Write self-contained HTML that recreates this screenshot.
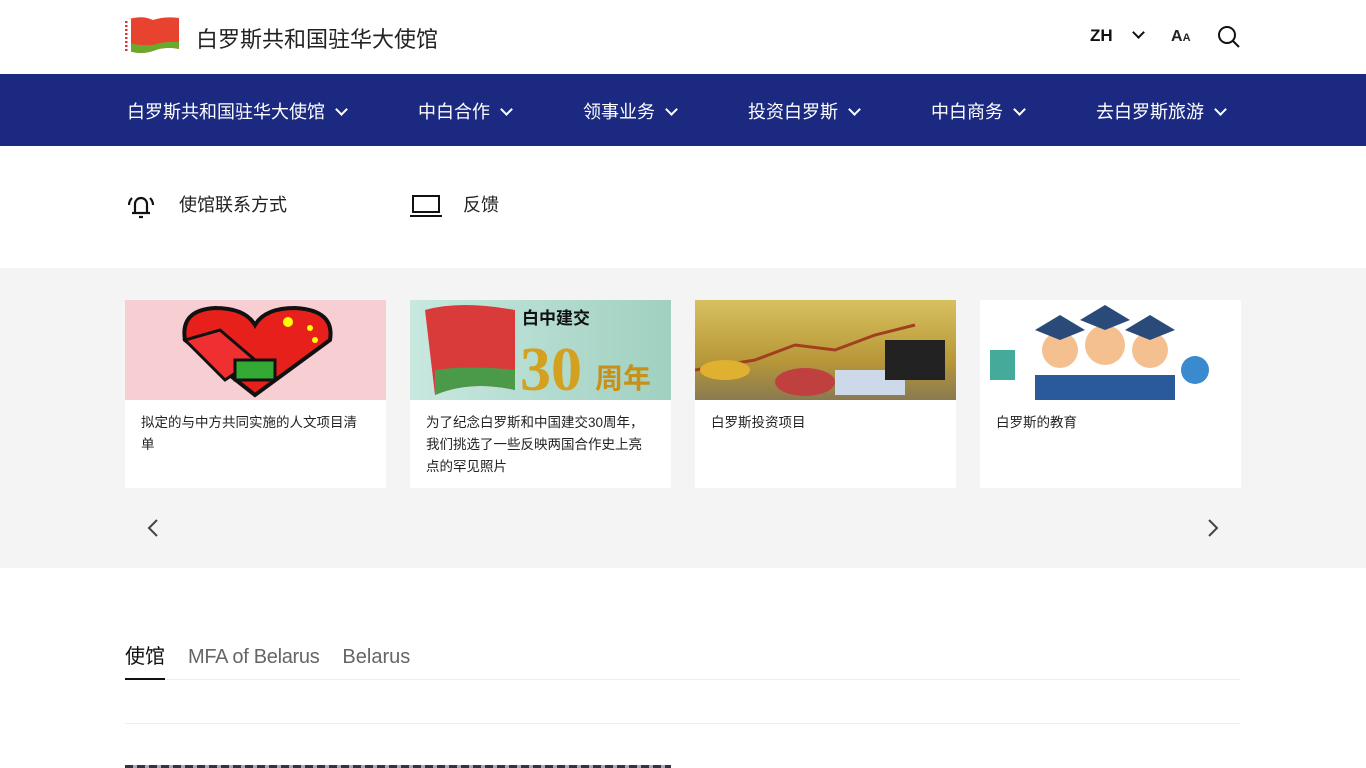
<!DOCTYPE html>
<html><head><meta charset="utf-8">
<style>
*{margin:0;padding:0;box-sizing:border-box}
body{width:1366px;height:768px;overflow:hidden;background:#fff;font-family:"Liberation Sans","Noto Sans CJK SC",sans-serif;color:#222}
.hdr{height:74px;position:relative}
.flag{position:absolute;left:125px;top:15px;width:54px;height:40px}
.title{position:absolute;left:196px;top:22px;font-size:22px;color:#222}
.zh{position:absolute;left:1090px;top:26px;font-size:17px;font-weight:bold;color:#111}
.nav{height:72px;background:#1b2a80;position:relative;color:#fff;font-size:18px}
.nav span{position:absolute;top:24px;white-space:nowrap}
.chev{display:inline-block;width:9px;height:9px;border-right:2px solid #fff;border-bottom:2px solid #fff;transform:rotate(45deg);margin-left:12px;position:relative;top:-4px}
.links{height:122px;position:relative;font-size:18px}
.gray{background:#f4f4f4;height:300px;position:relative}
.card{position:absolute;top:32px;width:261px;height:188px;background:#fff}
.card .img{height:100px;overflow:hidden;position:relative}
.card p{font-size:13.5px;line-height:22px;padding:12px 16px 0 16px;color:#222}
.tabs{position:absolute;top:640px;left:125px;font-size:20px}
</style></head><body>
<div class="hdr">
<svg class="flag" viewBox="0 0 54 40"><path d="M4 4 Q18 0 28 5 Q40 1 54 3 L54 34 Q40 31 28 36 Q16 40 4 36Z" fill="#e8432e"/><path d="M4 28 Q16 31 28 30 Q40 26 54 27 L54 34 Q40 31 28 36 Q16 40 4 36Z" fill="#6aaa2a"/><rect x="0" y="4" width="6" height="34" fill="#fff"/><path d="M1 6 V36" stroke="#d33" stroke-width="3" stroke-dasharray="2 2"/></svg>
<div class="title">白罗斯共和国驻华大使馆</div>
<div class="zh">ZH</div>
<span style="position:absolute;left:1134px;top:28px;width:9px;height:9px;border-right:2px solid #111;border-bottom:2px solid #111;transform:rotate(45deg)"></span>
<div style="position:absolute;left:1171px;top:28px;font-size:16px;font-weight:bold">A<span style="font-size:11px">A</span></div>
<svg style="position:absolute;left:1217px;top:25px" width="24" height="24" viewBox="0 0 24 24"><circle cx="10" cy="10" r="8" fill="none" stroke="#111" stroke-width="2"/><path d="M16 16 L22 22" stroke="#111" stroke-width="2"/></svg>
</div>
<div class="nav">
<span style="left:127px">白罗斯共和国驻华大使馆<i class="chev"></i></span>
<span style="left:418px">中白合作<i class="chev"></i></span>
<span style="left:583px">领事业务<i class="chev"></i></span>
<span style="left:748px">投资白罗斯<i class="chev"></i></span>
<span style="left:931px">中白商务<i class="chev"></i></span>
<span style="left:1096px">去白罗斯旅游<i class="chev"></i></span>
</div>
<div class="links">
<svg style="position:absolute;left:127px;top:46px" width="28" height="28" viewBox="0 0 28 28" fill="none" stroke="#111" stroke-width="2.2"><path d="M8 21 V12 A6 6 0 0 1 20 12 V21 Z M5 21 H23 M12 25 H16"/><path d="M5 6 Q2 9 2 13 M23 6 Q26 9 26 13"/></svg>
<div style="position:absolute;left:179px;top:45px">使馆联系方式</div>
<svg style="position:absolute;left:410px;top:48px" width="32" height="24" viewBox="0 0 32 24" fill="none" stroke="#111" stroke-width="2"><rect x="3" y="2" width="26" height="16"/><path d="M0 22 H32"/></svg>
<div style="position:absolute;left:463px;top:45px">反馈</div>
</div>
<div class="gray">
<div class="card" style="left:125px"><div class="img" style="background:#f7cfd2"><svg width="261" height="100"><path d="M130 95 L60 40 Q55 10 90 8 Q120 8 130 25 Q140 8 170 8 Q210 10 205 40Z" fill="#e8201c" stroke="#111" stroke-width="4"/><path d="M60 40 L100 80 L130 60 L95 30Z" fill="#f03030" stroke="#111" stroke-width="3"/><rect x="110" y="60" width="40" height="20" fill="#3a3" stroke="#111" stroke-width="3"/><circle cx="163" cy="22" r="5" fill="#ff0"/><circle cx="185" cy="28" r="3" fill="#ff0"/><circle cx="190" cy="40" r="3" fill="#ff0"/></svg></div><p>拟定的与中方共同实施的人文项目清单</p></div>
<div class="card" style="left:410px"><div class="img" style="background:linear-gradient(90deg,#c8e8e0,#a0d0c0)"><svg width="261" height="100"><path d="M15 10 Q50 0 105 10 L105 90 Q60 80 25 95Z" fill="#d93a3a"/><path d="M25 70 Q60 65 105 70 L105 90 Q60 80 25 95Z" fill="#4a9a4a"/><text x="110" y="90" font-size="62" font-weight="bold" fill="#d4a020" font-family="Liberation Serif,serif">30</text><text x="185" y="88" font-size="28" font-weight="bold" fill="#c89018" font-family="Noto Sans CJK SC,sans-serif">周年</text><text x="112" y="24" font-size="17" font-weight="bold" fill="#111" font-family="Noto Sans CJK SC,sans-serif">白中建交</text></svg></div><p>为了纪念白罗斯和中国建交30周年，我们挑选了一些反映两国合作史上亮点的罕见照片</p></div>
<div class="card" style="left:695px"><div class="img" style="background:linear-gradient(180deg,#d8c060,#b89838 60%,#8a7a50)"><svg width="261" height="100"><path d="M0 70 L60 60 L100 45 L140 50 L180 35 L220 25" stroke="#a04020" stroke-width="3" fill="none"/><ellipse cx="30" cy="70" rx="25" ry="10" fill="#e0b030"/><ellipse cx="110" cy="82" rx="30" ry="14" fill="#c04040"/><rect x="140" y="70" width="70" height="25" fill="#cdd8e8"/><path d="M190 40 h60 v40 h-60z" fill="#222"/></svg></div><p>白罗斯投资项目</p></div>
<div class="card" style="left:980px"><div class="img" style="background:#fff"><svg width="261" height="100"><circle cx="80" cy="50" r="18" fill="#f5c090"/><circle cx="125" cy="45" r="20" fill="#f5c090"/><circle cx="170" cy="50" r="18" fill="#f5c090"/><path d="M55 30 L80 15 L105 30 L80 40Z M100 20 L125 5 L150 20 L125 30Z M145 30 L170 15 L195 30 L170 40Z" fill="#2a4a7a"/><rect x="55" y="75" width="140" height="25" fill="#2a5a9a"/><rect x="10" y="50" width="25" height="30" fill="#4a9"/><circle cx="215" cy="70" r="14" fill="#3a8ad0"/></svg></div><p>白罗斯的教育</p></div>
<svg style="position:absolute;left:145px;top:250px" width="16" height="20"><path d="M12 2 L4 10 L12 18" stroke="#444" stroke-width="2" fill="none"/></svg>
<svg style="position:absolute;left:1205px;top:250px" width="16" height="20"><path d="M4 2 L12 10 L4 18" stroke="#444" stroke-width="2" fill="none"/></svg>
</div>
<div class="tabs"><span style="color:#111">使馆</span><span style="color:#666;margin-left:23px;letter-spacing:-0.3px">MFA of Belarus</span><span style="color:#666;margin-left:23px">Belarus</span></div>
<div style="position:absolute;left:125px;top:679px;width:1115px;height:1px;background:#eee"></div>
<div style="position:absolute;left:125px;top:678px;width:40px;height:2px;background:#111"></div>
<div style="position:absolute;left:125px;top:723px;width:1115px;height:1px;background:#eee"></div>
<div style="position:absolute;left:125px;top:765px;width:546px;height:3px;background:repeating-linear-gradient(90deg,#334 0 8px,#aab 8px 12px)"></div>
</body></html>
